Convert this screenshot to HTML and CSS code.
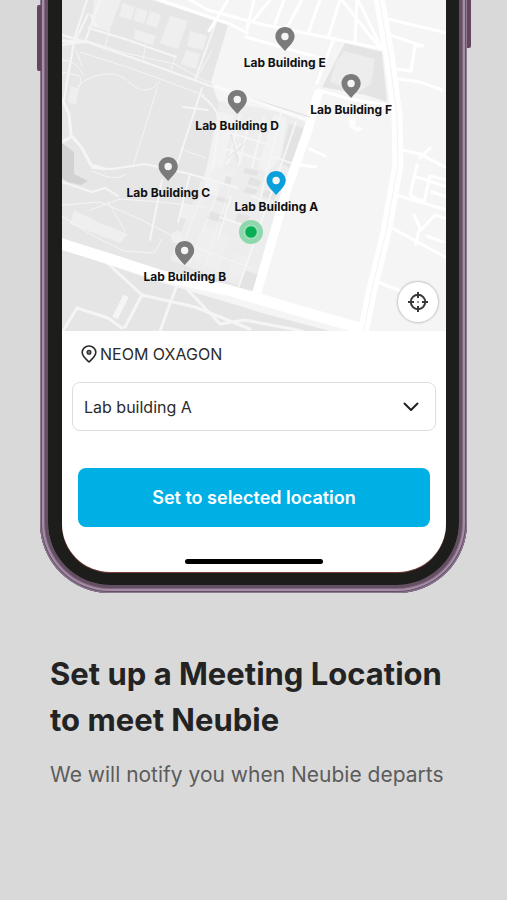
FILE: index.html
```html
<!DOCTYPE html>
<html lang="en">
<head>
<meta charset="utf-8">
<meta name="viewport" content="width=device-width, initial-scale=1">
<title>Set up a Meeting Location</title>
<link rel="stylesheet" href="styles.css">
</head>
<body>
<svg class="sprite" aria-hidden="true">
  <symbol id="pin" viewBox="0 0 20 24">
    <path fill="currentColor" d="M10 0C4.600 0 .4 4.200.4 9.500C.4 14.500 5 18.500 10 24C15 18.500 19.600 14.500 19.600 9.500C19.600 4.200 15.400 0 10 0Z"/>
    <circle cx="10" cy="9.500" r="3.700" fill="#f5f5f5"/>
  </symbol>
</svg>
<main class="page">
  <section class="phone">
    <span class="side-key side-key-left"></span>
    <span class="side-key side-key-right"></span>
    <div class="bezel">
      <div class="screen">
        <div class="map">
          <svg class="map-art" viewBox="62 0 384 331" preserveAspectRatio="xMidYMid slice" aria-hidden="true">
            <rect x="62" width="385" height="331" fill="#f5f5f5"/>
            <!-- park and campus ground -->
            <path fill="#e6e6e6" d="M62 0H152L228 25L211 82L219 104L216 145L207 166L238 172L248 138L260 108L308 120L298 165L268 248L256 292L190 281L62 238Z"/>
            <path fill="#e5e5e5" d="M62 249L150 279L266 314L330 331H62Z"/>
            <path fill="#ededed" d="M219 101L260 108L308 120L298 165L268 248L256 292L170 260L207 166Z"/>
            <path fill="#f2f2f2" d="M219 112L234 116L226 155L216 196L204 190L207 166Z"/>
            <path fill="#f2f2f2" d="M274 114L287 118L280 158L268 172L258 168Z"/>
            <path fill="#d2d2d2" d="M62 143L74 152V174L88 181L81 185L68 182L62 178Z"/>
            <path fill="#e4e4e4" d="M345 43L382 52L387 102L366 95L322 87Z"/>
            <path fill="#ededed" d="M344 51L375 59L371 84L359 92L330 82L336 62Z"/>
            <path fill="#fdfdfd" d="M348 117L356 119L355 126L364 128L358 132L350 128Z"/>
            <!-- building blocks -->
            <g fill="#efefef">
              <path d="M94 0H121L109 32L91 26ZM123 3L135 7L131 20L119 16ZM137 8L148 11L144 24L133 20ZM150 11L161 15L157 28L146 24ZM170 16L188 21L178 49L160 43ZM135 29L156 36L153 45L134 39ZM190 31L207 36L203 50L187 46ZM186 50L200 54L196 69L181 64ZM71 86L79 89L76 105L68 102Z"/>
              <path d="M182 202L198 208L193 222L179 217ZM74 210L98 222L128 234L120 243L70 224ZM204 226L231 235L218 270L194 259ZM214 166L236 171L231 187L208 181ZM236 253L248 257L242 277L228 272Z"/>
              <circle cx="177" cy="237" r="6"/>
            </g>
            <g fill="#e3e3e3">
              <path d="M289 124L304 128L290 168L280 163ZM226 176L232 178L230 186L224 184ZM250 177L262 181L259 187L247 184ZM245 168L259 171L257 176L243 173ZM246 187L258 190L255 195L243 192ZM265 190L277 194L274 200L262 196ZM218 196L230 200L227 204L216 200ZM210 211L225 216L222 223L206 218ZM238 213L250 216L246 225L235 221ZM244 270L258 275L253 290L240 287Z"/>
            </g>
            <g fill="none" stroke="#f5f5f5" stroke-linecap="round" stroke-linejoin="round">
              <!-- park paths -->
              <g stroke-width="1">
                <path d="M62 72L80 76L81 84L75 92M78 86Q92 73 112 74Q123 75 130 83Q142 94 153 88L160 81M158 86L133 166M181 149L206 158M76 50L82 66M110 30L104 49M146 42L143 60M176 55L171 70M85 40L125 53L175 64L203 80L265 98M80 52L130 68L190 90L205 96M212 50L197 78M62 60Q76 60 84 76"/>
                <path d="M92 171L105 176Q118 180 126 174M90 210L120 199L160 202L205 207M62 205L100 202L142 220L190 245L253 269M62 216L90 234L124 251L154 253L162 239M108 202L125 231M209 178L181 250M221 184L190 263M230 188L205 266"/>
              </g>
              <g stroke-width="2">
                <path d="M62 35L90 43L150 64L205 84L265 106M62 45L82 42M87 0L75 36L64 100M100 0L85 42M89 28L128 40L176 57M216 22L195 80M202 88L177 165M202 96Q217 107 219 120L213 170M183 107L208 110"/>
                <path d="M92 168L112 169L145 164L190 174L238 188M62 182L92 192L105 188L118 196M162 180L150 240M190 174L178 222"/>
              </g>
              <path stroke-width="3" d="M62 99L69 114L71 135L82 148L91 165L104 169M71 137L62 142M62 41L85 42M105 261L142 295L125 327M142 295L195 307L250 329M177 285L160 331M188 290L220 324L245 320L302 331M63 331L77 308L108 318L122 328"/>
              <path stroke-width="6" stroke-linecap="butt" d="M115 318L126 296"/>
              <path stroke-width="2" d="M62 35L76 39L88 14M91 15L96 26M240 115L228 163M250 119L239 165M264 118L252 168M230 133L270 145M226 149L262 160M240 144L226 164M233 138L240 158M281 114L260 200M296 122L239 286M269 155L291 163M252 196L266 202M231 196L218 239M220 217L252 228"/>
            </g>
            <path d="M231 134L238 162M247 142L228 158" fill="none" stroke="#e2e2e2"/>
            <!-- residential streets -->
            <g fill="none" stroke="#fff" stroke-width="3" stroke-linejoin="round" stroke-linecap="round">
              <path d="M160 0L230 24L247 33M190 0L208 10L260 24L330 38L388 50M228 0L209 31M254 0L247 29M270 0L252 22M284 0L275 24M302 0L286 29M320 0L309 31M340 0L328 38M357 0L355 42M342 0L379 47M358 0L382 49M246 37L320 58M334 38L317 83M388 19L447 33M387 34L423 46H415L411 71L395 69M392 78L420 82L442 90M318 90L350 99L386 105M402 150L420 154L447 168M420 158L430 148M300 165L316 167M310 149L325 156"/>
              <path d="M396 195L447 210M392 228L447 258M378 282L403 292M417 165L410 195L424 202L430 176L447 180M414 215L421 230L435 215L447 219M419 230L416 244M427 236L443 242M414 176L447 187M432 192L447 197"/>
            </g>
            <path d="M379 -2L389 55L397 115L398 165L386 232L372 289L363 333" fill="none" stroke="#fff" stroke-width="11"/>
            <path d="M379 -2L389 55L397 115L398 165L386 232L372 289L363 333" fill="none" stroke="#f3f3f3" stroke-width="1"/>
            <path d="M319 91L307 133L286 192L255 299" fill="none" stroke="#fff" stroke-width="9"/>
            <path d="M58 243L110 259L162 276L228 290L300 311L360 328" fill="none" stroke="#fff" stroke-width="11"/>
            <path d="M250 98L310 117" fill="none" stroke="#dedede" stroke-width="1"/>
            <path d="M215 86L306 120" fill="none" stroke="#fafafa" stroke-width="3"/>
          </svg>
          <button class="marker marker-e" type="button"><svg class="marker-icon" aria-hidden="true"><use href="#pin"/></svg>Lab Building E</button>
          <button class="marker marker-f" type="button"><svg class="marker-icon" aria-hidden="true"><use href="#pin"/></svg>Lab Building F</button>
          <button class="marker marker-d" type="button"><svg class="marker-icon" aria-hidden="true"><use href="#pin"/></svg>Lab Building D</button>
          <button class="marker marker-c" type="button"><svg class="marker-icon" aria-hidden="true"><use href="#pin"/></svg>Lab Building C</button>
          <button class="marker marker-a" type="button"><svg class="marker-icon" aria-hidden="true"><use href="#pin"/></svg>Lab Building A</button>
          <button class="marker marker-b" type="button"><svg class="marker-icon" aria-hidden="true"><use href="#pin"/></svg>Lab Building B</button>
          <span class="here"></span>
          <button class="locate" type="button" aria-label="Center on my location">
            <svg class="locate-icon" viewBox="0 0 20 20" aria-hidden="true">
              <circle cx="10" cy="10" r="7.200" fill="none" stroke="#383838" stroke-width="2"/>
              <path d="M10 0V6M10 14V20M0 10H6M14 10H20" stroke="#383838" stroke-width="2"/>
              <circle cx="10" cy="10" r="1" fill="#777"/>
            </svg>
          </button>
        </div>
        <form class="panel">
          <label class="place" for="building">
            <svg class="place-icon" viewBox="0 0 16 18" aria-hidden="true">
              <path d="M8 1C4.200 1 1.200 3.900 1.200 7.500C1.200 11 4.500 13.700 8 17C11.500 13.700 14.800 11 14.800 7.500C14.800 3.900 11.800 1 8 1Z" fill="none" stroke="#2b2b2b" stroke-width="1.600" stroke-linejoin="round"/>
              <circle cx="8" cy="7.300" r="1.900" fill="#777" stroke="#2b2b2b" stroke-width="1.300"/>
            </svg>
            NEOM OXAGON
          </label>
          <div class="picker">
            <select class="picker-select" id="building">
              <option>Lab building A</option>
              <option>Lab building B</option>
              <option>Lab building C</option>
              <option>Lab building D</option>
              <option>Lab building E</option>
              <option>Lab building F</option>
            </select>
            <svg class="picker-arrow" viewBox="0 0 16 10" aria-hidden="true"><path d="M1.500 1.500L8 8L14.500 1.500" fill="none" stroke="#222" stroke-width="2" stroke-linecap="round" stroke-linejoin="round"/></svg>
          </div>
          <button class="submit" type="button">Set to selected location</button>
        </form>
        <div class="home-bar"></div>
      </div>
    </div>
  </section>
  <section class="copy">
    <h1 class="title">Set up a Meeting Location<br>to meet Neubie</h1>
    <p class="lead">We will notify you when Neubie departs</p>
  </section>
</main>
</body>
</html>
```

FILE: styles.css
```css
* {
  box-sizing: border-box;
}

body {
  margin: 0;
  min-height: 100vh;
  background: #d9d9d9;
  color: #2b2b2b;
  font-family: Inter, "Liberation Sans", sans-serif;
}

button,
select {
  margin: 0;
  font: inherit;
  color: inherit;
}

.sprite {
  position: absolute;
  width: 0;
  height: 0;
}

.page {
  overflow: hidden;
}

/* The frame's top edge runs off the page. */
.phone {
  position: relative;
  margin: -8px 40px 0;
  padding: 8px 8px 8px;
  border-radius: 0 0 70px 70px;
  background: #a58da6;
  box-shadow: inset 0 0 0 1px #8b7a8f, inset 0 0 0 2px #65506a, inset 0 0 0 4px #a58da6, inset 0 0 0 5px #80677f, inset 0 0 0 8px #654f62;
}

.side-key {
  position: absolute;
  top: 8px;
  width: 4px;
  background: #64455f;
}

.side-key-left {
  top: 13px;
  left: -3px;
  height: 66px;
  border-radius: 2px 0 0 2px;
}

.side-key-right {
  right: -4px;
  height: 48px;
  border-radius: 0 0 2px 0;
}

.bezel {
  padding: 0 13px 13px 14px;
  border-radius: 0 0 62px 62px;
  background: #1d1e1c;
}

.screen {
  overflow: hidden;
  padding-bottom: 8px;
  border-radius: 0 0 48px 48px;
  background: #fff;
  box-shadow: 0 1px 0 #7a3f3a;
}

.map {
  position: relative;
  aspect-ratio: 384 / 331;
}

.map-art {
  display: block;
  width: 100%;
  height: 100%;
}

.marker {
  position: absolute;
  display: flex;
  flex-direction: column;
  align-items: center;
  gap: 4px;
  padding: 0;
  border: 0;
  background: none;
  color: #111;
  font-size: 12px;
  font-weight: 700;
  line-height: 16px;
  white-space: nowrap;
  transform: translateX(-50%);
}

.marker-icon {
  width: 20px;
  height: 24px;
  color: #7b7b7b;
}

.marker-e { left: 58%; top: 8.300%; }
.marker-f { left: 75.300%; top: 22.300%; }
.marker-d { left: 45.600%; top: 27.300%; }
.marker-c { left: 27.700%; top: 47.300%; }
.marker-a { left: 55.800%; top: 51.600%; }
.marker-b { left: 32%; top: 72.800%; }

.marker-a .marker-icon {
  color: #0aa0dc;
}

.here {
  position: absolute;
  left: 49.300%;
  top: 70%;
  width: 24px;
  height: 24px;
  border: 5px solid #8fd8ae;
  border-radius: 50%;
  background: radial-gradient(circle, #08ae54 5px, #d5f2e0 7px);
  transform: translate(-50%, -50%);
}

.locate {
  position: absolute;
  right: 8px;
  bottom: 9px;
  display: grid;
  place-items: center;
  width: 40px;
  height: 40px;
  padding: 0;
  border: 0;
  border-radius: 50%;
  background: #fff;
  box-shadow: 0 0 2px 1px #c4c4c4;
}

.locate-icon {
  width: 20px;
  height: 20px;
}

.panel {
  display: flex;
  flex-direction: column;
  padding: 11px 10px 0;
}

.place {
  display: flex;
  align-items: center;
  gap: 3px;
  padding-left: 9px;
  font-size: 16px;
  line-height: 24px;
}

.place-icon {
  width: 16px;
  height: 18px;
}

.picker {
  position: relative;
  margin-top: 16px;
}

.picker-select {
  display: block;
  width: 100%;
  height: 49px;
  padding: 0 40px 0 11px;
  border: 1px solid #dedede;
  border-radius: 8px;
  background: #fff;
  appearance: none;
  font-size: 16px;
}

.picker-arrow {
  position: absolute;
  top: 20px;
  right: 17px;
  width: 16px;
  height: 10px;
  pointer-events: none;
}

.submit {
  margin: 37px 6px 0;
  padding: 0;
  border: 0;
  border-radius: 8px;
  background: #00b0e5;
  color: #fff;
  font-size: 18px;
  font-weight: 600;
  line-height: 59px;
}

.home-bar {
  width: 36%;
  height: 5px;
  margin: 32px auto 0;
  border-radius: 3px;
  background: #000;
}

.copy {
  padding: 58px 12px 48px 50px;
}

.title {
  margin: 0;
  color: #232323;
  font-size: 31px;
  font-weight: 700;
  line-height: 46px;
}

.lead {
  margin: 16px 0 0;
  color: #5c5c5c;
  font-size: 21px;
  line-height: 32px;
}
```
